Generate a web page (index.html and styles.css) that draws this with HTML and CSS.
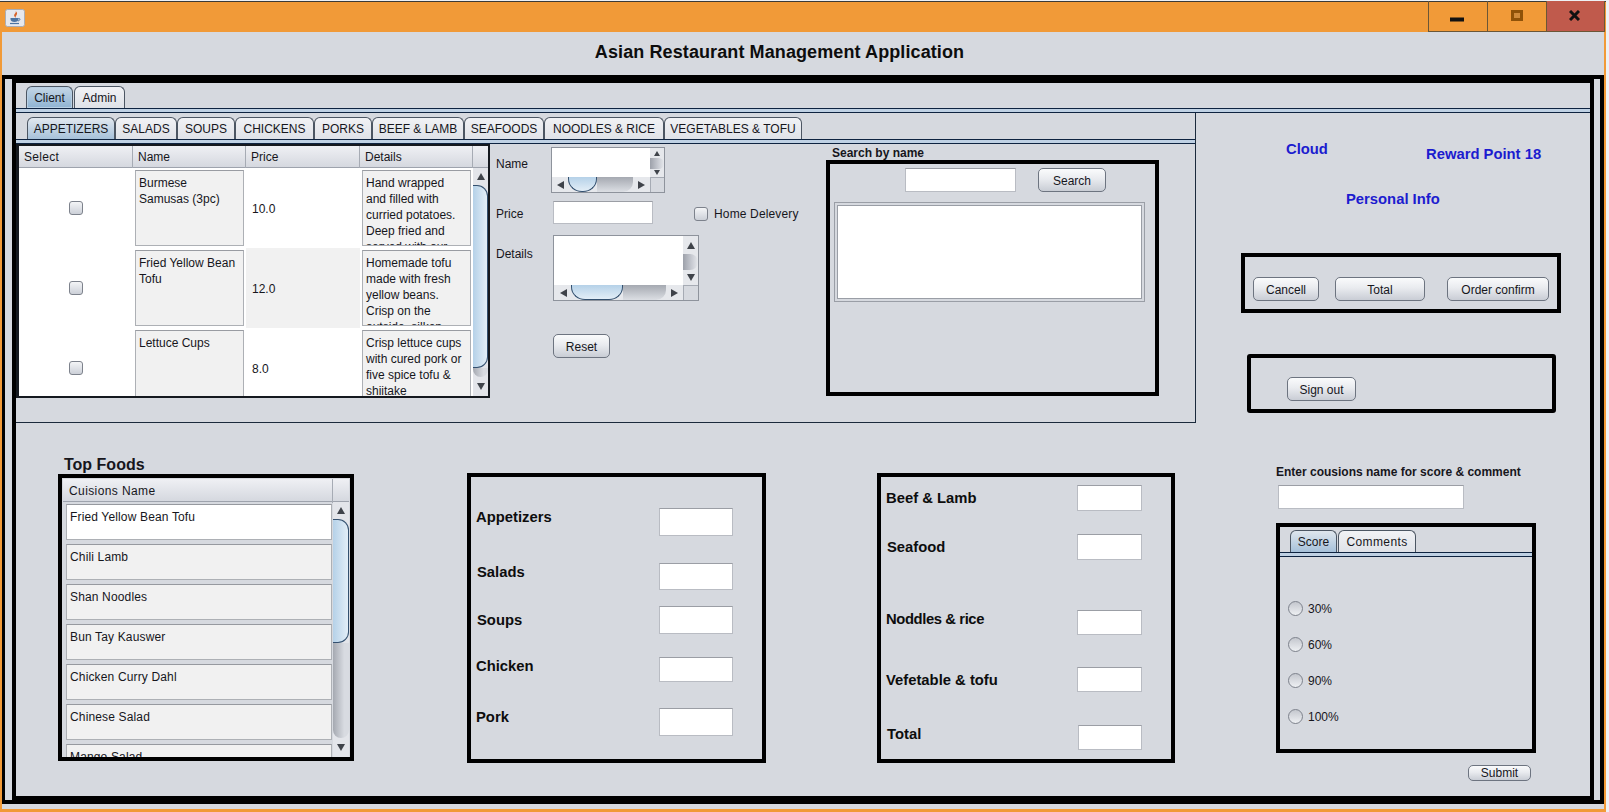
FILE: index.html
```html
<!DOCTYPE html>
<html lang="en">
<head>
    <meta charset="UTF-8">
    <meta name="viewport" content="width=device-width, initial-scale=1.0">
    <title>Asian Restaurant Management Application</title>
    <link rel="stylesheet" href="styles.css">
</head>
<body>
<div class="window">
    <div class="titlebar">
        <span class="java-icon">
            <svg width="20" height="18" viewBox="0 0 20 18">
                <rect x="0.5" y="0.5" width="19" height="17" rx="2" fill="#e6e8ee" stroke="#a9adb6"/>
                <path d="M10.5 2 C12 4 8 5 9.5 7.5 C10 8.5 11 8.5 11 8.5 C10 7 12.5 6 12 4 C11.8 3 11 2.500 10.500 2 Z" fill="#d8632a"/>
                <path d="M5.500 9 H13.500 V10 C13.500 12 12 13 9.500 13 C7 13 5.500 12 5.500 10 Z" fill="#4c74a3"/>
                <path d="M13.500 9.500 C15.500 9 15.500 11.500 13 12" fill="none" stroke="#4c74a3"/>
                <path d="M5 14.500 H14" stroke="#4c74a3" stroke-width="1.200"/>
            </svg>
        </span>
        <div class="window-buttons">
            <span class="win-btn win-min">
                <svg width="14" height="5" viewBox="0 0 14 5"><rect width="14" height="4" y="0.500" fill="#111"/></svg>
            </span>
            <span class="win-btn">
                <svg width="12" height="11" viewBox="0 0 12 11"><rect x="1.500" y="1.500" width="9" height="8" fill="#cf8a3a" stroke="#8f5208" stroke-width="3"/></svg>
            </span>
            <span class="win-btn win-close">
                <svg width="11" height="11" viewBox="0 0 11 11"><path d="M1 1 L10 10 M10 1 L1 10" stroke="#111" stroke-width="3"/></svg>
            </span>
        </div>
    </div>

    <div class="client">
        <h1 class="app-title">Asian Restaurant Management Application</h1>
        <div class="frame-outer">
            <div class="frame-inner">
                <div class="tabs tabs-main">
                    <span class="tab active">Client</span>
                    <span class="tab">Admin</span>
                </div>
                <div class="tab-rule"></div>

                <div class="upper">
                    <div class="order-panel">
                        <div class="tabs tabs-cat">
                            <span class="tab active">APPETIZERS</span>
                            <span class="tab">SALADS</span>
                            <span class="tab">SOUPS</span>
                            <span class="tab">CHICKENS</span>
                            <span class="tab">PORKS</span>
                            <span class="tab">BEEF &amp; LAMB</span>
                            <span class="tab">SEAFOODS</span>
                            <span class="tab">NOODLES &amp; RICE</span>
                            <span class="tab">VEGETABLES &amp; TOFU</span>
                        </div>
                        <div class="tab-rule"></div>
                        <div class="order-body">
                            <div class="menu-table">
                                <div class="menu-head">
                                    <span>Select</span>
                                    <span>Name</span>
                                    <span>Price</span>
                                    <span>Details</span>
                                    <span></span>
                                </div>
                                <div class="menu-main">
                                    <div class="menu-rows">
                                        <div class="menu-row">
                                            <div class="cell-check"><input type="checkbox" class="check"></div>
                                            <div class="text-box">Burmese<br>Samusas (3pc)</div>
                                            <div class="cell-price">10.0</div>
                                            <div class="text-box">Hand wrapped<br>and filled with<br>curried potatoes.<br>Deep fried and<br>served with our</div>
                                        </div>
                                        <div class="menu-row alt">
                                            <div class="cell-check"><input type="checkbox" class="check"></div>
                                            <div class="text-box">Fried Yellow Bean<br>Tofu</div>
                                            <div class="cell-price">12.0</div>
                                            <div class="text-box">Homemade tofu<br>made with fresh<br>yellow beans.<br>Crisp on the<br>outside, silken</div>
                                        </div>
                                        <div class="menu-row">
                                            <div class="cell-check"><input type="checkbox" class="check"></div>
                                            <div class="text-box">Lettuce Cups</div>
                                            <div class="cell-price">8.0</div>
                                            <div class="text-box">Crisp lettuce cups<br>with cured pork or<br>five spice tofu &amp;<br>shiitake</div>
                                        </div>
                                    </div>
                                    <div class="vbar vbar-menu">
                                        <i class="arrow up"></i>
                                        <div class="thumb"></div>
                                        <div class="track"></div>
                                        <i class="arrow down"></i>
                                    </div>
                                </div>
                            </div>

                            <div class="item-form">
                                <div class="form-row row-name">
                                    <label class="form-label">Name</label>
                                    <div class="scroll-box box-name">
                                        <div class="scroll-area"></div>
                                        <div class="mini-v">
                                            <i class="arrow up"></i>
                                            <div class="lump"></div>
                                            <i class="arrow down"></i>
                                        </div>
                                        <div class="mini-h">
                                            <i class="arrow left"></i>
                                            <div class="h-thumb"></div>
                                            <div class="h-track"></div>
                                            <i class="arrow right"></i>
                                        </div>
                                        <div class="corner"></div>
                                    </div>
                                </div>
                                <div class="form-row row-price">
                                    <label class="form-label">Price</label>
                                    <input type="text" class="field field-price">
                                    <input type="checkbox" class="check check-home">
                                    <label class="home-label">Home Delevery</label>
                                </div>
                                <div class="form-row row-details">
                                    <label class="form-label">Details</label>
                                    <div class="scroll-box box-details">
                                        <div class="scroll-area"></div>
                                        <div class="mini-v">
                                            <i class="arrow up"></i>
                                            <div class="lump"></div>
                                            <i class="arrow down"></i>
                                        </div>
                                        <div class="mini-h">
                                            <i class="arrow left"></i>
                                            <div class="h-thumb"></div>
                                            <div class="h-track"></div>
                                            <i class="arrow right"></i>
                                        </div>
                                        <div class="corner"></div>
                                    </div>
                                </div>
                                <button class="btn btn-reset">Reset</button>
                            </div>

                            <div class="search-col">
                                <div class="search-title">Search by name</div>
                                <div class="black-box search-box">
                                    <div class="search-top">
                                        <input type="text" class="field field-search">
                                        <button class="btn btn-search">Search</button>
                                    </div>
                                    <div class="search-list"><div class="search-list-in"></div></div>
                                </div>
                            </div>
                        </div>
                    </div>

                    <div class="side">
                        <div class="side-names">
                            <span class="blue-text cloud">Cloud</span>
                            <span class="blue-text reward">Reward Point 18</span>
                        </div>
                        <div class="blue-text personal">Personal Info</div>
                        <div class="black-box order-btns">
                            <button class="btn btn-cancel">Cancell</button>
                            <button class="btn btn-total">Total</button>
                            <button class="btn btn-confirm">Order confirm</button>
                        </div>
                        <div class="black-box signout-box">
                            <button class="btn btn-signout">Sign out</button>
                        </div>
                    </div>
                </div>

                <div class="lower">
                    <div class="foods">
                        <div class="foods-title">Top Foods</div>
                        <div class="black-box foods-box">
                            <div class="foods-head">
                                <span>Cuisions Name</span>
                                <span></span>
                            </div>
                            <div class="foods-main">
                                <div class="foods-rows">
                                    <div class="food-row">Fried Yellow Bean Tofu</div>
                                    <div class="food-row">Chili Lamb</div>
                                    <div class="food-row">Shan Noodles</div>
                                    <div class="food-row">Bun Tay Kauswer</div>
                                    <div class="food-row">Chicken Curry Dahl</div>
                                    <div class="food-row">Chinese Salad</div>
                                    <div class="food-row">Mango Salad</div>
                                </div>
                                <div class="vbar vbar-foods">
                                    <i class="arrow up"></i>
                                    <div class="thumb"></div>
                                    <div class="track"></div>
                                    <i class="arrow down"></i>
                                </div>
                            </div>
                        </div>
                    </div>

                    <div class="black-box counts counts-left">
                        <div class="count-row c-appetizers"><span class="count-label">Appetizers</span><input type="text" class="field"></div>
                        <div class="count-row c-salads"><span class="count-label">Salads</span><input type="text" class="field"></div>
                        <div class="count-row c-soups"><span class="count-label">Soups</span><input type="text" class="field"></div>
                        <div class="count-row c-chicken"><span class="count-label">Chicken</span><input type="text" class="field"></div>
                        <div class="count-row c-pork"><span class="count-label">Pork</span><input type="text" class="field"></div>
                    </div>

                    <div class="black-box counts counts-right">
                        <div class="count-row c-beef"><span class="count-label">Beef &amp; Lamb</span><input type="text" class="field"></div>
                        <div class="count-row c-seafood"><span class="count-label">Seafood</span><input type="text" class="field"></div>
                        <div class="count-row c-noodles"><span class="count-label">Noddles &amp; rice</span><input type="text" class="field"></div>
                        <div class="count-row c-vege"><span class="count-label">Vefetable &amp; tofu</span><input type="text" class="field"></div>
                        <div class="count-row c-total"><span class="count-label">Total</span><input type="text" class="field"></div>
                    </div>

                    <div class="score-col">
                        <div class="score-title">Enter cousions name for score &amp; comment</div>
                        <input type="text" class="field field-cuisine">
                        <div class="black-box score-box">
                            <div class="tabs tabs-score">
                                <span class="tab active">Score</span>
                                <span class="tab">Comments</span>
                            </div>
                            <div class="tab-rule"></div>
                            <div class="radios">
                                <label class="radio-row"><input type="radio" name="score" class="radio">30%</label>
                                <label class="radio-row"><input type="radio" name="score" class="radio">60%</label>
                                <label class="radio-row"><input type="radio" name="score" class="radio">90%</label>
                                <label class="radio-row"><input type="radio" name="score" class="radio">100%</label>
                            </div>
                        </div>
                        <button class="btn btn-submit">Submit</button>
                    </div>
                </div>
            </div>
        </div>
    </div>
</div>
</body>
</html>
```

FILE: styles.css
```css
* {
    box-sizing: border-box;
}
html, body {
    margin: 0;
    height: 100%;
    overflow: hidden;
}
body {
    background: #eef1f5;
    font-family: "Liberation Sans", Arial, sans-serif;
    font-size: 12px;
    line-height: 16px;
    color: #16161c;
}
input, button {
    font-family: inherit;
    margin: 0;
}

/* window */
.window {
    width: 1606px;
    height: 811px;
    margin-top: 1px;
    border-top: 1px solid #3c3a36;
    background: #f19a38;
    display: flex;
    flex-direction: column;
}
.titlebar {
    height: 30px;
    display: flex;
    align-items: center;
    justify-content: space-between;
    padding-left: 5px;
}
.java-icon {
    display: flex;
    margin-top: 1px;
}
.window-buttons {
    display: flex;
    height: 31px;
    margin-top: -1px;
    margin-right: 1px;
    border-bottom: 1px solid #6b5636;
}
.win-btn {
    width: 59px;
    display: flex;
    align-items: center;
    justify-content: center;
    border-left: 1px solid #6b5636;
    padding-bottom: 2px;
}
.win-min {
    padding: 7px 2px 0 0;
}
.win-close {
    width: 59px;
    background: #c05a4c;
    border-right: 1px solid #6b5636;
    padding-right: 3px;
}
.client {
    flex: 1;
    margin: 0 2px 3px 2px;
    background: #d6d9df;
    display: flex;
    flex-direction: column;
    padding-bottom: 5px;
}
.app-title {
    margin: 0;
    height: 43px;
    padding-right: 47px;
    font-size: 18px;
    line-height: 40px;
    letter-spacing: .1px;
    text-align: center;
    color: #0d0d0d;
}
.frame-outer {
    flex: 1;
    border: 4px solid #000;
    border-left-width: 3px;
    padding: 0 6px 0 7px;
    display: flex;
}
.frame-inner {
    flex: 1;
    border: 4px solid #000;
    display: flex;
    flex-direction: column;
}

/* tabs */
.tabs {
    display: grid;
    align-items: end;
    height: 25px;
}
.tabs-main {
    grid-template-columns: 47px 51px;
    padding-left: 10px;
    column-gap: 1px;
}
.tabs-cat {
    height: 26px;
    grid-template-columns: 88px 62px 58px 79px 58px 92px 80px 120px 138px;
    padding-left: 11px;
}
.tabs-score {
    height: 25px;
    grid-template-columns: 47px 78px;
    padding-left: 10px;
    column-gap: 1px;
}
.tab {
    height: 22px;
    border: 1px solid #4c5663;
    border-bottom: none;
    border-radius: 6px 6px 0 0;
    background: linear-gradient(#f1f2f5, #dfe2e8);
    text-align: center;
    line-height: 23px;
    white-space: nowrap;
}
.tab.active {
    background: linear-gradient(#e2e8ef, #a6c1da);
}
.tabs-main .tab.active {
    background: linear-gradient(#c4d6e6, #8fb3d2);
    box-shadow: inset 0 0 0 1px #b9d0e4;
}
.tabs-score .tab:last-child {
    letter-spacing: .4px;
}
.tab-rule {
    height: 5px;
    border-top: 1px solid #0e2340;
    border-bottom: 1px solid #0e2340;
    background: #bfd1e4;
    flex: none;
}

/* upper part */
.upper {
    height: 310px;
    display: flex;
    flex: none;
}
.order-panel {
    width: 1180px;
    border-right: 1px solid #1b2a3c;
    border-bottom: 1px solid #1b2a3c;
}
.order-body {
    display: flex;
    align-items: flex-start;
}

/* menu table */
.menu-table {
    width: 474px;
    height: 254px;
    border: 2px solid #15191f;
    border-left-width: 3px;
    background: #fff;
    flex: none;
}
.menu-head {
    height: 22px;
    display: grid;
    grid-template-columns: 114px 113px 114px 113px 15px;
    background: linear-gradient(#eff0f4, #d5d8df);
    border-bottom: 1px solid #9ea3ad;
    line-height: 22px;
}
.menu-head span {
    border-right: 1px solid #a6abb4;
    padding-left: 5px;
}
.menu-head span:first-child {
    letter-spacing: .3px;
}
.menu-head span:last-child {
    border-right: none;
}
.menu-main {
    display: flex;
    height: 228px;
}
.menu-rows {
    width: 454px;
    overflow: hidden;
}
.menu-row {
    height: 80px;
    display: grid;
    grid-template-columns: 114px 113px 114px 113px;
    align-items: center;
}
.cell-check {
    display: flex;
    justify-content: center;
}
.cell-price {
    height: 80px;
    line-height: 82px;
    padding-left: 6px;
}
.menu-row.alt .cell-price {
    background: #f1f1f1;
}
.text-box {
    height: 76px;
    margin: 0 2px;
    padding: 4px 3px;
    border: 1px solid #adb0b5;
    border-top-color: #999ca2;
    background: #f1f1f1;
    overflow: hidden;
    white-space: nowrap;
}

/* scrollbars */
.vbar {
    width: 15px;
    display: flex;
    flex-direction: column;
    background: #e3e5ea;
}
.vbar .arrow {
    flex: none;
    margin: 6px auto;
}
.vbar .arrow.up {
    margin: 5px auto;
}
.thumb {
    flex: none;
    border: 1px solid #33506f;
    border-left: none;
    border-radius: 0 11px 11px 0;
    background: linear-gradient(90deg, #b5d1e8, #e3eef7);
}
.track {
    flex: 1;
    background: linear-gradient(90deg, #a5a9b1, #d8dbe1 70%);
    border-radius: 0 0 8px 8px;
}
.vbar-menu .thumb {
    height: 183px;
}
.vbar-foods {
    width: 16px;
}
.vbar-foods .thumb {
    height: 124px;
}
.arrow {
    display: block;
    width: 0;
    height: 0;
    flex: none;
    border-style: solid;
    border-color: transparent;
}
.arrow.up {
    border-width: 0 4px 7px 4px;
    border-bottom-color: #3f434a;
}
.arrow.down {
    border-width: 7px 4px 0 4px;
    border-top-color: #3f434a;
}
.arrow.left {
    border-width: 4px 7px 4px 0;
    border-right-color: #3f434a;
}
.arrow.right {
    border-width: 4px 0 4px 7px;
    border-left-color: #3f434a;
}
.scroll-box {
    display: grid;
    border: 1px solid #8e939c;
    background: #d6d9df;
    flex: none;
}
.box-name {
    width: 114px;
    height: 46px;
    grid-template-columns: 98px 14px;
    grid-template-rows: 29px 15px;
}
.box-details {
    width: 146px;
    height: 66px;
    grid-template-columns: 129px 15px;
    grid-template-rows: 49px 15px;
}
.scroll-area {
    background: #fff;
}
.mini-v {
    display: flex;
    flex-direction: column;
    align-items: center;
    justify-content: space-between;
    background: #e6e8ec;
    overflow: hidden;
}
.box-name .mini-v {
    padding: 3px 0 2px;
}
.box-name .mini-v .arrow.up {
    border-width: 0 3px 5px 3px;
}
.box-name .mini-v .arrow.down {
    border-width: 5px 3px 0 3px;
}
.box-details .mini-v {
    padding: 6px 0 4px;
}
.lump {
    width: 100%;
    border-radius: 0 8px 8px 0;
    background: linear-gradient(90deg, #9da1aa, #c9ccd3 60%, #e6e8ec);
    flex: none;
}
.box-name .lump {
    height: 11px;
}
.box-details .lump {
    height: 16px;
}
.mini-h {
    display: flex;
    align-items: center;
    background: #e6e8ec;
    overflow: hidden;
}
.h-thumb {
    height: 15px;
    margin-left: 4px;
    border: 1px solid #33506f;
    border-top: none;
    border-radius: 0 0 14px 14px / 0 0 13px 13px;
    background: linear-gradient(#b5d1e8, #e3eef7);
    flex: none;
}
.h-track {
    height: 15px;
    margin-right: 5px;
    background: linear-gradient(#a5a9b1, #dcdfe4);
    border-radius: 0 0 10px 0;
    flex: none;
}
.box-name .mini-h {
    padding-left: 5px;
}
.box-details .mini-h {
    padding-left: 6px;
}
.box-name .h-thumb {
    width: 29px;
}
.box-name .h-track {
    width: 36px;
}
.box-details .h-thumb {
    width: 52px;
}
.box-details .h-track {
    width: 43px;
}
.corner {
    border-left: 1px solid #a6abb4;
    border-top: 1px solid #a6abb4;
}

/* form bits */
.check {
    appearance: none;
    width: 14px;
    height: 14px;
    margin: 0;
    border: 1px solid #7d828c;
    border-radius: 3px;
    background: linear-gradient(#f4f5f7, #ccd0d8);
    flex: none;
}
.radio {
    appearance: none;
    width: 15px;
    height: 15px;
    margin: 0 5px 0 0;
    border: 1px solid #7d828c;
    border-radius: 50%;
    background: linear-gradient(#c4c7ce, #eef0f3);
    flex: none;
}
.field {
    height: 24px;
    border: 1px solid #b9bcc3;
    border-top-color: #9b9ea5;
    border-radius: 0;
    background: #fff;
    padding: 0;
    outline: none;
    flex: none;
    display: block;
}
.btn {
    height: 24px;
    padding: 2px 0 0;
    border: 1px solid #6d7480;
    border-radius: 5px;
    background: linear-gradient(#fafbfc, #e9ebef 45%, #c9cdd5);
    font-size: 12px;
    color: #16161c;
    flex: none;
    display: block;
}
.item-form {
    width: 336px;
    padding-top: 3px;
    padding-left: 6px;
    flex: none;
}
.form-row {
    display: flex;
    align-items: flex-start;
}
.form-label {
    flex: none;
}
.row-name .form-label {
    width: 55px;
    margin-top: 9px;
}
.row-price {
    margin-top: 8px;
}
.row-price .form-label {
    width: 57px;
    margin-top: 5px;
}
.field-price {
    width: 100px;
    height: 23px;
}
.check-home {
    margin: 6px 6px 0 41px;
}
.home-label {
    margin-top: 5px;
    letter-spacing: .15px;
}
.row-details {
    margin-top: 11px;
}
.row-details .form-label {
    width: 57px;
    margin-top: 11px;
}
.btn-reset {
    width: 57px;
    margin: 33px 0 0 57px;
}

/* search */
.search-col {
    width: 333px;
    flex: none;
}
.search-title {
    font-weight: bold;
    line-height: 14px;
    margin-top: 2px;
    padding-left: 6px;
}
.black-box {
    border: 4px solid #000;
}
.search-box {
    height: 236px;
    padding: 4px;
}
.search-top {
    display: flex;
    padding-left: 71px;
}
.field-search {
    width: 111px;
}
.btn-search {
    width: 68px;
    margin-left: 22px;
}
.search-list {
    width: 311px;
    height: 100px;
    margin-top: 10px;
    border: 1px solid #9a9ea6;
    padding: 2px;
}
.search-list-in {
    height: 100%;
    border: 1px solid #9a9ea6;
    background: #fff;
}

/* right side */
.side {
    flex: 1;
}
.blue-text {
    display: block;
    font-size: 14.8px;
    font-weight: bold;
    color: #1c1ccf;
}
.side-names {
    display: flex;
    align-items: flex-start;
    padding: 28px 0 0 90px;
}
.cloud {
    width: 140px;
}
.reward {
    margin-top: 5px;
}
.personal {
    margin: 29px 0 0 150px;
}
.order-btns {
    width: 320px;
    height: 60px;
    margin: 46px 0 0 45px;
    padding: 20px 0 0 8px;
    display: flex;
}
.btn-cancel {
    width: 66px;
}
.btn-total {
    width: 90px;
    margin-left: 16px;
}
.btn-confirm {
    width: 102px;
    margin-left: 22px;
}
.signout-box {
    width: 309px;
    height: 59px;
    margin: 41px 0 0 51px;
    padding: 19px 0 0 36px;
    border-radius: 3px;
}
.btn-signout {
    width: 69px;
}

/* lower part */
.lower {
    flex: 1;
    display: flex;
    align-items: flex-start;
}
.foods {
    width: 296px;
    margin-left: 42px;
    padding-top: 33px;
    flex: none;
}
.foods-title {
    font-size: 16px;
    font-weight: bold;
    line-height: 18px;
    padding-left: 6px;
}
.foods-box {
    height: 287px;
    padding: 1px 1px 0 1px;
}
.foods-head {
    height: 23px;
    display: grid;
    grid-template-columns: 270px 16px;
    background: linear-gradient(#eff0f4, #d5d8df);
    border-bottom: 1px solid #9ea3ad;
    line-height: 24px;
}
.foods-head span:first-child {
    border-right: 1px solid #a6abb4;
    padding-left: 6px;
    letter-spacing: .4px;
}
.foods-main {
    display: flex;
    height: 255px;
}
.foods-rows {
    width: 270px;
    overflow: hidden;
    padding: 2px 0 0 3px;
}
.food-row {
    width: 266px;
    height: 36px;
    margin-bottom: 4px;
    padding: 4px 3px;
    border: 1px solid #adb0b5;
    border-top-color: #96999f;
    background: #f1f1f1;
    white-space: nowrap;
    letter-spacing: .15px;
}
.food-row:first-child {
    background: #fff;
}
.counts {
    height: 290px;
    margin-top: 50px;
    flex: none;
}
.counts-left {
    width: 299px;
    margin-left: 113px;
}
.counts-right {
    width: 298px;
    margin-left: 111px;
}
.count-row {
    display: flex;
    align-items: flex-start;
}
.count-label {
    font-size: 14.8px;
    font-weight: bold;
    color: #0d0d0d;
    flex: none;
}
.counts-left .count-label {
    width: 183px;
    margin-left: 5px;
}
.counts-left .field {
    width: 74px;
    height: 28px;
}
.counts-right .count-label {
    width: 191px;
    margin-left: 5px;
}
.counts-right .field {
    width: 65px;
    height: 26px;
}
.c-appetizers { margin-top: 31px; }
.c-appetizers .count-label { margin-top: 1px; }
.c-salads { margin-top: 27px; }
.c-salads .count-label { margin: 1px 0 0 6px; width: 182px; }
.c-salads .field { height: 27px; }
.c-soups { margin-top: 16px; }
.c-soups .count-label { margin: 6px 0 0 6px; width: 182px; }
.c-chicken { margin-top: 23px; }
.c-chicken .count-label { margin-top: 1px; }
.c-chicken .field { height: 25px; }
.c-pork { margin-top: 26px; }
.c-pork .count-label { margin-top: 1px; }

.c-beef { margin-top: 8px; }
.c-beef .count-label { margin-top: 5px; }
.c-seafood { margin-top: 23px; }
.c-seafood .count-label { margin-top: 5px; margin-left: 6px; width: 190px; }
.c-noodles { margin-top: 50px; }
.c-noodles .count-label { margin-top: 1px; letter-spacing: -.4px; }
.c-noodles .field { height: 25px; }
.c-vege { margin-top: 32px; }
.c-vege .count-label { margin-top: 5px; }
.c-vege .field { height: 25px; }
.c-total { margin-top: 33px; }
.c-total .count-label { margin-top: 1px; margin-left: 6px; }
.c-total .field { width: 64px; height: 25px; }

/* score */
.score-col {
    margin: 42px 0 0 101px;
    width: 262px;
    flex: none;
}
.score-title {
    font-weight: bold;
    line-height: 15px;
    white-space: nowrap;
}
.field-cuisine {
    width: 186px;
    margin: 5px 0 0 2px;
}
.score-box {
    width: 260px;
    height: 230px;
    margin-top: 14px;
}
.tabs-score .tab.active {
    background: linear-gradient(#dfe6ed, #a6c1da);
}
.radios {
    padding: 44px 0 0 8px;
}
.radio-row {
    display: flex;
    align-items: center;
    height: 15px;
    margin-bottom: 21px;
}
.btn-submit {
    width: 63px;
    height: 16px;
    padding-top: 0;
    margin: 12px 0 0 192px;
}
```
